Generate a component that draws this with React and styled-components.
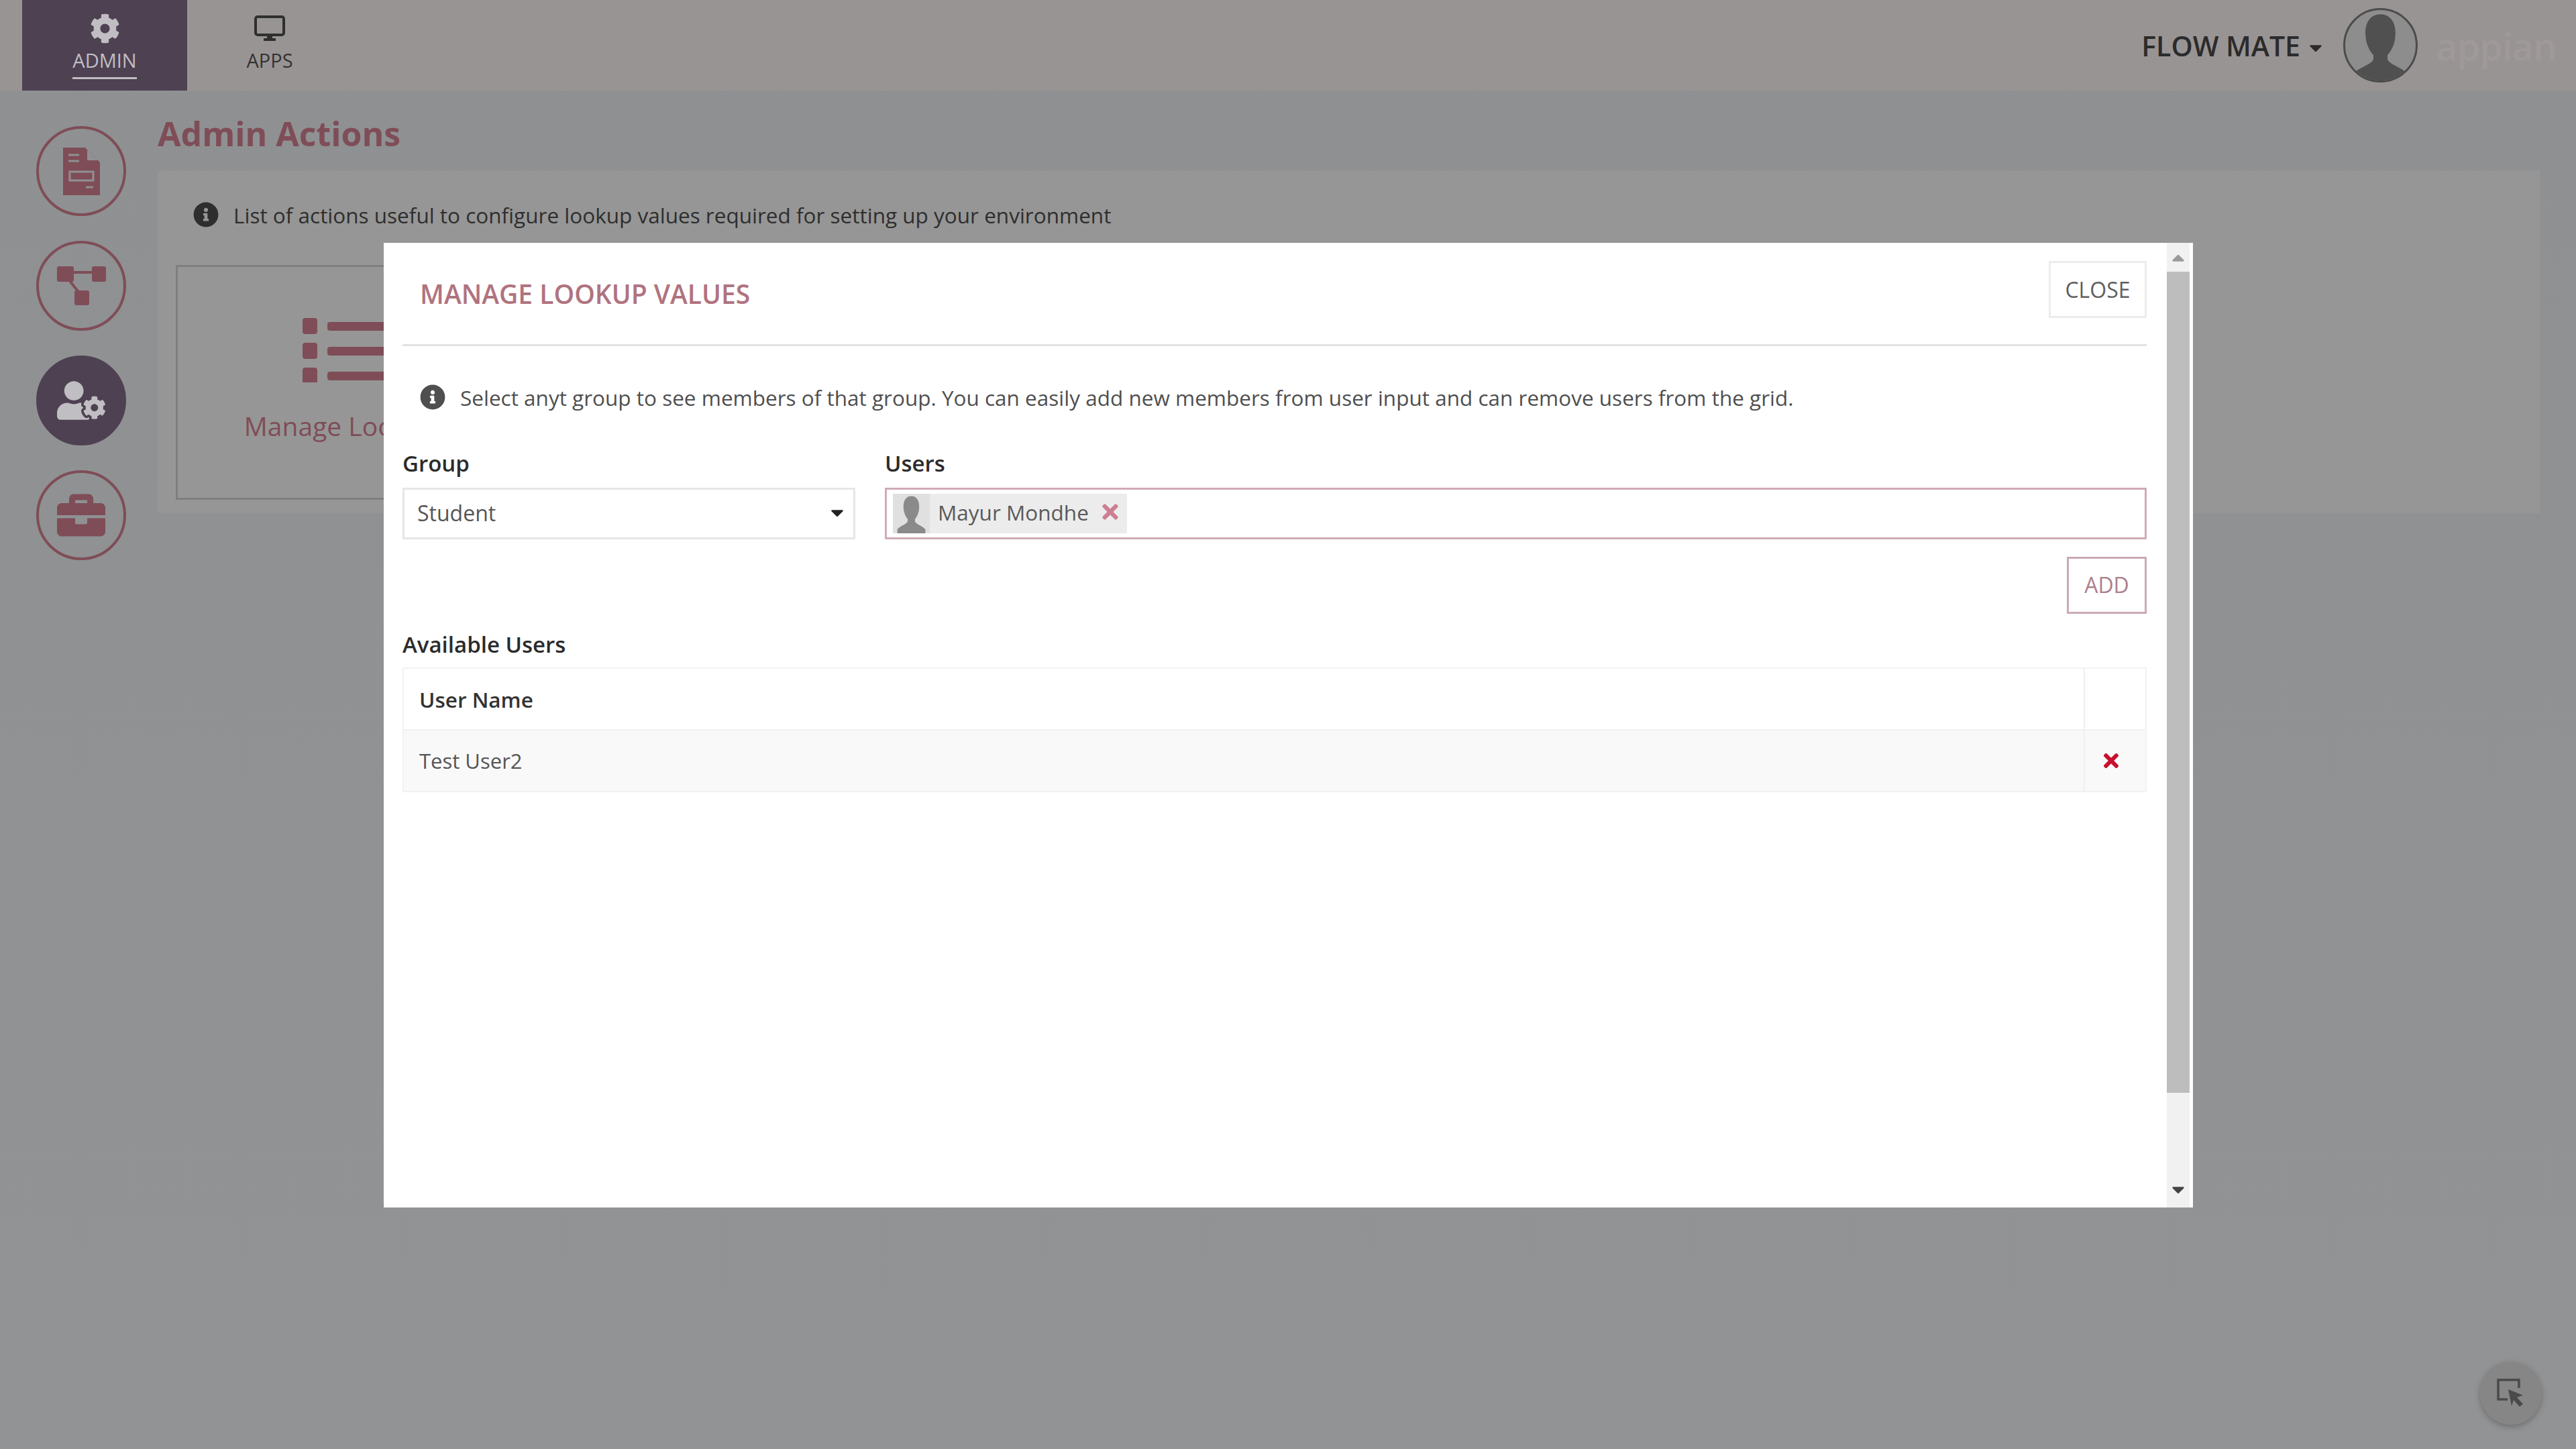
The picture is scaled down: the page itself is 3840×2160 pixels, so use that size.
import React from 'react';
import styled, { createGlobalStyle } from 'styled-components';
import { FaCog, FaUserCog, FaBriefcase, FaInfoCircle, FaTimes, FaCaretDown, FaCaretUp } from 'react-icons/fa';

const maroon = '#7f4d57';
const dimAccent = '#b0737f';

const GlobalStyle = createGlobalStyle`
  html, body {
    margin: 0;
    padding: 0;
    background: #8f9092;
    font-family: "Open Sans", "Liberation Sans", sans-serif;
  }
`;

const Page = styled.div`
  position: relative;
  width: 3840px;
  height: 2160px;
  overflow: hidden;
  background: linear-gradient(#8e9092, #929395);
`;

const TopBar = styled.header`
  height: 135px;
  padding: 0 31px 0 33px;
  display: flex;
  align-items: center;
  background: #999494;
`;

const NavTab = styled.div`
  width: 246px;
  height: 135px;
  box-sizing: border-box;
  padding-top: 20px;
  display: flex;
  flex-direction: column;
  align-items: center;
  background: ${(p) => (p.$active ? '#4e4152' : 'transparent')};
  color: ${(p) => (p.$active ? '#c0bec2' : '#333333')};
`;

const NavIcon = styled.div`
  height: 44px;
  display: flex;
  align-items: center;
  justify-content: center;
  font-size: 45px;
`;

const NavLabel = styled.span`
  margin-top: 6px;
  padding-bottom: 5px;
  font-size: 29px;
  line-height: 40px;
  border-bottom: 3px solid ${(p) => (p.$active ? '#c0bec2' : 'transparent')};
`;

const UserBox = styled.div`
  margin-left: auto;
  display: flex;
  align-items: center;
`;

const UserName = styled.span`
  font-size: 41px;
  font-weight: 600;
  color: #2b2b2b;
`;

const UserCaret = styled(FaCaretDown)`
  margin: 6px 26px 0 8px;
  font-size: 30px;
  color: #2b2b2b;
`;

const Avatar = styled.div`
  width: 111px;
  height: 111px;
  box-sizing: border-box;
  border-radius: 50%;
  border: 3px solid #4c4c4c;
  background: #8d8d8d;
  overflow: hidden;
`;

const Logo = styled.span`
  margin-left: 27px;
  width: 178px;
  font-size: 56px;
  font-weight: 600;
  letter-spacing: -1px;
  color: #a09999;
`;

const Body = styled.div`
  display: flex;
`;

const SideBar = styled.nav`
  width: 235px;
  flex: none;
  box-sizing: border-box;
  padding: 53px 47px 0 54px;
  display: flex;
  flex-direction: column;
  gap: 37px;
`;

const SideCircle = styled.div`
  width: 134px;
  height: 134px;
  box-sizing: border-box;
  border-radius: 50%;
  display: flex;
  align-items: center;
  justify-content: center;
  border: 4px solid ${(p) => (p.$active ? '#4e4152' : maroon)};
  background: ${(p) => (p.$active ? '#4e4152' : 'transparent')};
  color: ${(p) => (p.$active ? '#c0bec2' : maroon)};
`;

const Main = styled.main`
  flex: 1;
  padding-right: 54px;
`;

const PageTitle = styled.h1`
  margin: 0;
  height: 120px;
  box-sizing: border-box;
  padding-top: 8px;
  display: flex;
  align-items: center;
  font-size: 50px;
  font-weight: 700;
  color: ${maroon};
`;

const Panel = styled.section`
  height: 510px;
  box-sizing: border-box;
  padding: 27px;
  background: #969696;
`;

const InfoRow = styled.div`
  display: flex;
  align-items: center;
  gap: 22px;
  font-size: 31.5px;
  color: ${(p) => (p.$modal ? '#4f4f4f' : '#2e2e2e')};
  svg {
    flex: none;
    font-size: 38px;
  }
`;

const PanelInfo = styled(InfoRow)`
  padding-left: 26px;
  height: 76px;
`;

const ActionCard = styled.div`
  margin-top: 37px;
  width: 624px;
  height: 350px;
  box-sizing: border-box;
  padding-top: 76px;
  display: flex;
  flex-direction: column;
  align-items: center;
  border: 3px solid #7f7f7f;
  color: ${maroon};
`;

const CardLabel = styled.span`
  margin-top: 38px;
  font-size: 39px;
  white-space: nowrap;
`;

const FloatButton = styled.div`
  position: absolute;
  right: 51px;
  bottom: 36px;
  width: 92px;
  height: 94px;
  border-radius: 50%;
  display: flex;
  align-items: center;
  justify-content: center;
  background: #868686;
  box-shadow: 0 3px 8px rgba(0, 0, 0, 0.25);
`;

const Modal = styled.div`
  position: absolute;
  left: 572px;
  top: 362px;
  width: 2697px;
  height: 1438px;
  display: flex;
  background: #fff;
`;

const ModalBody = styled.div`
  flex: 1;
  min-width: 0;
  padding: 0 30px 0 28px;
`;

const ModalHeader = styled.div`
  height: 151px;
  display: flex;
  align-items: center;
  justify-content: space-between;
  border-bottom: 3px solid #e2e2e2;
`;

const ModalTitle = styled.h2`
  margin: 0 0 0 26px;
  font-size: 39px;
  font-weight: 600;
  color: ${dimAccent};
`;

const Button = styled.button`
  box-sizing: border-box;
  padding: 0 0 ${(p) => (p.$accent ? 3 : 0)}px;
  font-family: inherit;
  font-size: 32px;
  background: #fff;
  border: 3px solid ${(p) => (p.$accent ? '#cbaab3' : '#ececec')};
  color: ${(p) => (p.$accent ? '#ad808c' : '#5f5f5f')};
  width: ${(p) => p.$w}px;
  height: ${(p) => p.$h}px;
`;

const CloseButton = styled(Button)`
  margin-bottom: 12px;
`;

const ModalInfo = styled(InfoRow)`
  padding-left: 26px;
  height: 76px;
  margin-top: 38px;
`;

const FieldRow = styled.div`
  margin-top: 39px;
  display: grid;
  grid-template-columns: 675px 1fr;
  column-gap: 44px;
`;

const Label = styled.label`
  display: block;
  font-size: 33px;
  font-weight: 600;
  line-height: 44px;
  color: #2b2b2b;
`;

const Select = styled.div`
  margin-top: 14px;
  height: 77px;
  box-sizing: border-box;
  padding: 0 9px 3px 19px;
  display: flex;
  align-items: center;
  justify-content: space-between;
  border: 3px solid #e6e6e6;
  font-size: 32px;
  color: #555;
  svg {
    font-size: 30px;
    color: #222;
  }
`;

const UserInput = styled.div`
  margin-top: 14px;
  height: 77px;
  box-sizing: border-box;
  padding: 6px 9px;
  display: flex;
  border: 3px solid #d0abb5;
`;

const Chip = styled.div`
  height: 59px;
  box-sizing: border-box;
  padding-bottom: 5px;
  display: flex;
  align-items: center;
  background: #ececec;
  font-size: 31.5px;
  color: #5a5a5a;
`;

const ChipAvatar = styled.div`
  width: 55px;
  height: 59px;
  margin: 0 12px -5px 0;
  background: #e0e0e0;
`;

const ChipRemove = styled(FaTimes)`
  margin: 0 8px 0 15px;
  font-size: 34px;
  color: #cd7f92;
`;

const AddRow = styled.div`
  margin-top: 26px;
  display: flex;
  justify-content: flex-end;
`;

const TableLabel = styled(Label)`
  margin-top: 24px;
  line-height: 44px;
`;

const Table = styled.div`
  margin-top: 12px;
  border: 2px solid #f2f2f2;
`;

const TableRow = styled.div`
  height: 90px;
  display: grid;
  grid-template-columns: 1fr 92px;
  background: ${(p) => (p.$shade ? '#f9f9f9' : '#fff')};
  border-top: ${(p) => (p.$shade ? '2px solid #f0f0f0' : 'none')};
`;

const Cell = styled.div`
  display: flex;
  align-items: center;
  padding-left: 23px;
  font-size: ${(p) => (p.$head ? 31.5 : 31)}px;
  font-weight: ${(p) => (p.$head ? 600 : 400)};
  color: ${(p) => (p.$head ? '#333' : '#555')};
`;

const ActionCell = styled.div`
  box-sizing: border-box;
  padding-right: 12px;
  display: flex;
  align-items: center;
  justify-content: center;
  border-left: 2px solid #f0f0f0;
  color: #c8102e;
  font-size: 32px;
`;

const ScrollTrack = styled.div`
  width: 34px;
  margin-right: 5px;
  display: flex;
  flex-direction: column;
  align-items: center;
  background: #f1f1f1;
`;

const ScrollArrow = styled.div`
  height: 43px;
  display: flex;
  align-items: center;
  justify-content: center;
  font-size: 30px;
  color: ${(p) => p.$color};
`;

const BottomArrow = styled(ScrollArrow)`
  margin-bottom: 6px;
`;

const ScrollThumb = styled.div`
  width: 100%;
  height: 1224px;
  background: #bdbdbd;
`;

const ScrollSpace = styled.div`
  flex: 1;
`;

const Silhouette = ({ color }) => (
  <svg viewBox="0 0 100 100" width="100%" height="100%" preserveAspectRatio="none">
    <path
      fill={color}
      d="M50 6C35 6 27 19 29 38c1 12 6 20 11 26v6c-2 7-20 11-28 20v10h76V90c-8-9-26-13-28-20v-6c5-6 10-14 11-26C73 19 65 6 50 6z"
    />
  </svg>
);

const DocIcon = () => (
  <svg width="55" height="71" viewBox="0 0 55 71">
    <path fill={maroon} d="M0 0h33l22 22v49H0z" />
    <path fill="#8f9092" d="M36 3l16 16H36z" />
    <path fill="none" stroke="#8f9092" strokeWidth="3" d="M8 11h16M8 20h16M10 36h35v13H10zM34 59h11" />
  </svg>
);

const FlowIcon = () => (
  <svg width="73" height="58" viewBox="0 0 73 58">
    <path fill="none" stroke={maroon} strokeWidth="4" d="M22 9h32M16 18l19 24" />
    <rect fill={maroon} x="0" y="0" width="25" height="23" rx="3" />
    <rect fill={maroon} x="52" y="0" width="21" height="23" rx="3" />
    <rect fill={maroon} x="26" y="36" width="22" height="22" rx="3" />
  </svg>
);

const ListIcon = () => (
  <svg width="246" height="96" viewBox="0 0 246 96">
    {[0, 37, 74].map((y) => (
      <g key={y} fill={maroon}>
        <rect x="0" y={y} width="22" height="24" rx="4" />
        <rect x="37" y={y + 6} width="209" height="13" rx="4" />
      </g>
    ))}
  </svg>
);

const MonitorIcon = () => (
  <svg width="46" height="39" viewBox="0 0 46 39">
    <rect x="2" y="2" width="42" height="27" rx="3" fill="none" stroke="#2f2f2f" strokeWidth="4" />
    <path fill="#2f2f2f" d="M19 29h8v5h5v4H14v-4h5z" />
  </svg>
);

const SelectCursorIcon = () => (
  <svg width="42" height="44" viewBox="0 0 42 44">
    <path fill="none" stroke="#4a4a4a" strokeWidth="3.5" d="M16 31H2V2h31v12" />
    <path fill="#4a4a4a" d="M17 16l22 9-9 3 9 10-5 4-9-10-3 9z" />
  </svg>
);

const App = () => {
  return (
    <Page>
      <GlobalStyle />
      <TopBar>
        <NavTab $active>
          <NavIcon>
            <FaCog />
          </NavIcon>
          <NavLabel $active>ADMIN</NavLabel>
        </NavTab>
        <NavTab>
          <NavIcon>
            <MonitorIcon />
          </NavIcon>
          <NavLabel>APPS</NavLabel>
        </NavTab>
        <UserBox>
          <UserName>FLOW MATE</UserName>
          <UserCaret />
          <Avatar>
            <Silhouette color="#505050" />
          </Avatar>
          <Logo>appian</Logo>
        </UserBox>
      </TopBar>
      <Body>
        <SideBar>
          <SideCircle>
            <DocIcon />
          </SideCircle>
          <SideCircle>
            <FlowIcon />
          </SideCircle>
          <SideCircle $active>
            <FaUserCog size={72} />
          </SideCircle>
          <SideCircle>
            <FaBriefcase size={72} />
          </SideCircle>
        </SideBar>
        <Main>
          <PageTitle>Admin Actions</PageTitle>
          <Panel>
            <PanelInfo>
              <FaInfoCircle />
              List of actions useful to configure lookup values required for setting up your environment
            </PanelInfo>
            <ActionCard>
              <ListIcon />
              <CardLabel>Manage Lookup Values</CardLabel>
            </ActionCard>
          </Panel>
        </Main>
      </Body>
      <FloatButton>
        <SelectCursorIcon />
      </FloatButton>
      <Modal>
        <ModalBody>
          <ModalHeader>
            <ModalTitle>MANAGE LOOKUP VALUES</ModalTitle>
            <CloseButton $w={146} $h={85}>CLOSE</CloseButton>
          </ModalHeader>
          <ModalInfo $modal>
            <FaInfoCircle />
            Select anyt group to see members of that group. You can easily add new members from user input and can remove users from the grid.
          </ModalInfo>
          <FieldRow>
            <div>
              <Label>Group</Label>
              <Select>
                Student
                <FaCaretDown />
              </Select>
            </div>
            <div>
              <Label>Users</Label>
              <UserInput>
                <Chip>
                  <ChipAvatar>
                    <Silhouette color="#8a8a8a" />
                  </ChipAvatar>
                  Mayur Mondhe
                  <ChipRemove />
                </Chip>
              </UserInput>
            </div>
          </FieldRow>
          <AddRow>
            <Button $accent $w={119} $h={85}>ADD</Button>
          </AddRow>
          <TableLabel>Available Users</TableLabel>
          <Table>
            <TableRow>
              <Cell $head>User Name</Cell>
              <ActionCell />
            </TableRow>
            <TableRow $shade>
              <Cell>Test User2</Cell>
              <ActionCell>
                <FaTimes />
              </ActionCell>
            </TableRow>
          </Table>
        </ModalBody>
        <ScrollTrack>
          <ScrollArrow $color="#9a9a9a">
            <FaCaretUp />
          </ScrollArrow>
          <ScrollThumb />
          <ScrollSpace />
          <BottomArrow $color="#444">
            <FaCaretDown />
          </BottomArrow>
        </ScrollTrack>
      </Modal>
    </Page>
  );
};

export default App;
